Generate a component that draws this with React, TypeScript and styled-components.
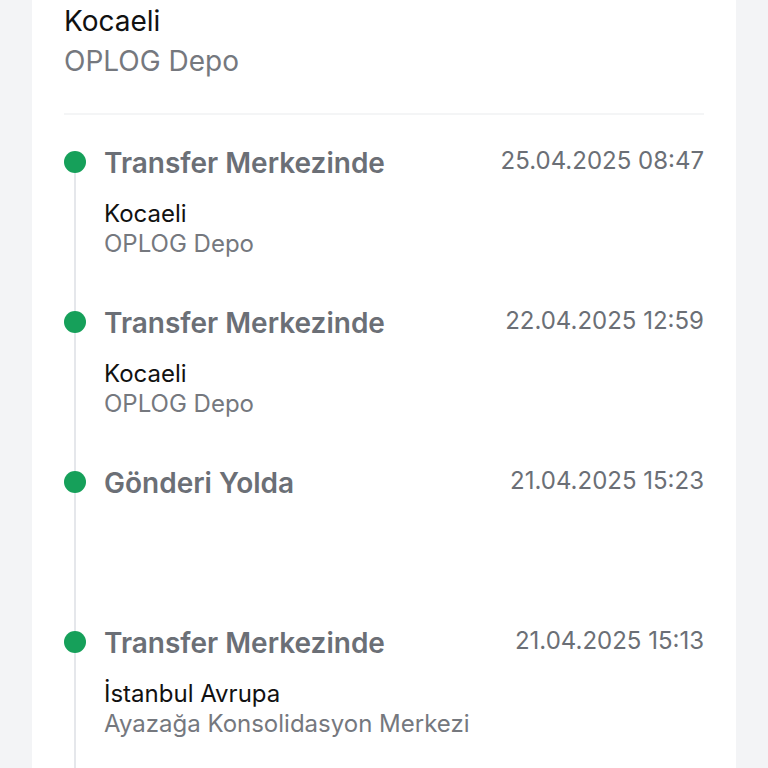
import styled, { createGlobalStyle } from 'styled-components';

const GlobalStyle = createGlobalStyle`
  html, body {
    margin: 0;
    padding: 0;
    background: #f3f4f6;
    font-family: Inter, "Noto Sans", "Liberation Sans", sans-serif;
  }
`;

const Page = styled.div`
  padding: 0 32px;
  height: 768px;
  overflow: hidden;
`;

const Card = styled.div`
  background: #fff;
  padding: 0 32px;
  min-height: 768px;
`;

const Header = styled.div`
  font-size: 28px;
  line-height: 40px;
  padding-top: 1px;
`;

const City = styled.div<{ $small?: boolean }>`
  color: #111;
  font-size: ${(p) => (p.$small ? '24px' : 'inherit')};
  line-height: ${(p) => (p.$small ? '30px' : 'inherit')};
`;

const Place = styled(City)`
  color: #75787e;
`;

const Divider = styled.div`
  height: 2px;
  background: #f4f5f6;
  margin-top: 32px;
`;

const List = styled.div`
  margin-top: 36px;
`;

const Item = styled.div`
  display: grid;
  grid-template-columns: 40px 1fr;
  min-height: 160px;
`;

const Rail = styled.div`
  display: flex;
  flex-direction: column;
  align-items: center;
  width: 22px;
`;

const Dot = styled.div`
  width: 22px;
  height: 22px;
  border-radius: 50%;
  background: #16a05a;
  flex-shrink: 0;
`;

const Line = styled.div`
  flex: 1;
  width: 2px;
  background: #e5e7eb;
`;

const Body = styled.div`
  display: flex;
  flex-direction: column;
`;

const Head = styled.div`
  display: flex;
  justify-content: space-between;
  align-items: center;
  height: 22px;
  margin-top: 1px;
`;

const Status = styled.div`
  font-size: 28px;
  font-weight: 600;
  color: #6b6f76;
  white-space: nowrap;
`;

const Date = styled.div`
  font-size: 24px;
  color: #6b6f76;
  white-space: nowrap;
  margin-top: -5px;
`;

const Sub = styled.div`
  margin-top: 25px;
`;

const events = [
  { status: 'Transfer Merkezinde', date: '25.04.2025 08:47', city: 'Kocaeli', place: 'OPLOG Depo' },
  { status: 'Transfer Merkezinde', date: '22.04.2025 12:59', city: 'Kocaeli', place: 'OPLOG Depo' },
  { status: 'Gönderi Yolda', date: '21.04.2025 15:23' },
  { status: 'Transfer Merkezinde', date: '21.04.2025 15:13', city: 'İstanbul Avrupa', place: 'Ayazağa Konsolidasyon Merkezi' },
];

export default function App() {
  return (
    <>
      <GlobalStyle />
      <Page>
        <Card>
          <Header>
            <City>Kocaeli</City>
            <Place>OPLOG Depo</Place>
          </Header>
          <Divider />
          <List>
            {events.map((e, i) => (
              <Item key={i}>
                <Rail>
                  <Dot />
                  <Line />
                </Rail>
                <Body>
                  <Head>
                    <Status>{e.status}</Status>
                    <Date>{e.date}</Date>
                  </Head>
                  {e.city && (
                    <Sub>
                      <City $small>{e.city}</City>
                      <Place $small>{e.place}</Place>
                    </Sub>
                  )}
                </Body>
              </Item>
            ))}
          </List>
        </Card>
      </Page>
    </>
  );
}
